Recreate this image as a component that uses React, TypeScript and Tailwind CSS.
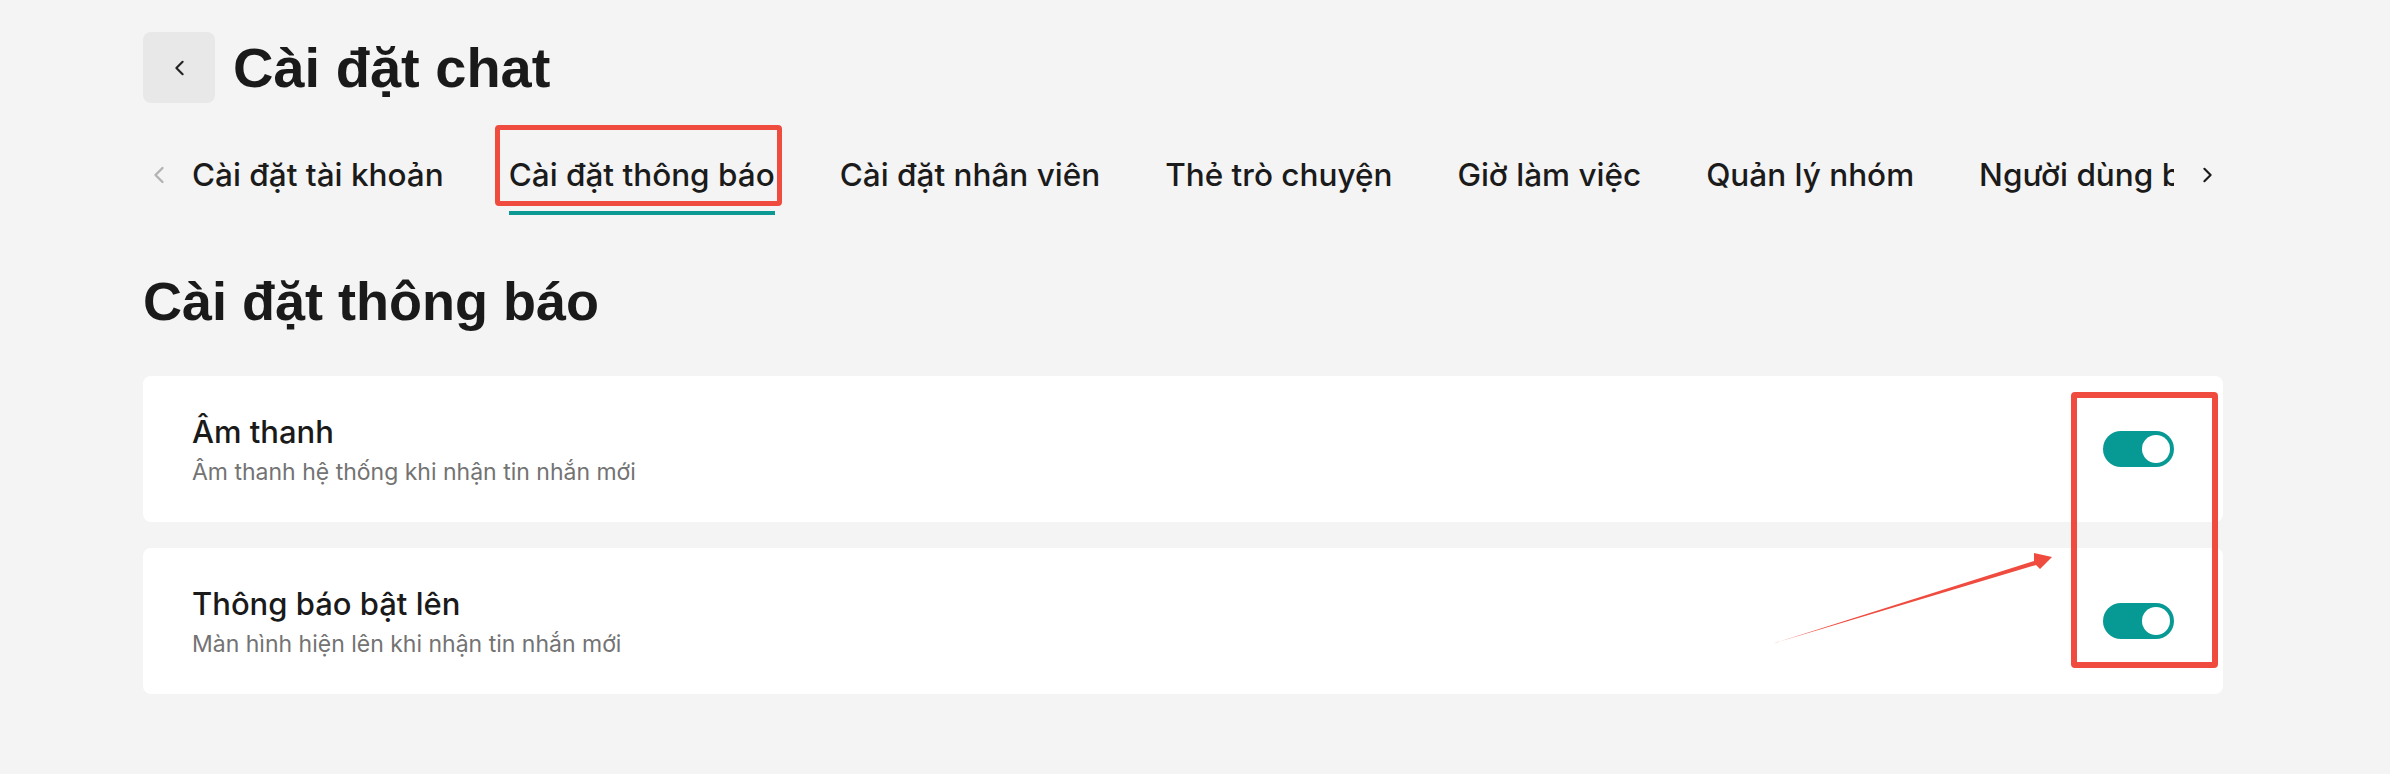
import { useState } from "react";

const TABS = [
  "Cài đặt tài khoản",
  "Cài đặt thông báo",
  "Cài đặt nhân viên",
  "Thẻ trò chuyện",
  "Giờ làm việc",
  "Quản lý nhóm",
  "Người dùng bị chặn",
];

const SETTINGS = [
  { key: "sound", title: "Âm thanh", desc: "Âm thanh hệ thống khi nhận tin nhắn mới" },
  { key: "popup", title: "Thông báo bật lên", desc: "Màn hình hiện lên khi nhận tin nhắn mới" },
];

function Chevron({ dir, className }: { dir: "left" | "right"; className?: string }) {
  return (
    <svg viewBox="0 0 12 18" className={className} fill="none" stroke="currentColor" strokeWidth={2.4} strokeLinecap="round" strokeLinejoin="round">
      {dir === "left" ? <path d="M9.5 2 L2.5 9 L9.5 16" /> : <path d="M2.5 2 L9.5 9 L2.5 16" />}
    </svg>
  );
}

function Toggle({ on, onChange }: { on: boolean; onChange: () => void }) {
  return (
    <button
      onClick={onChange}
      className={`relative h-[36px] w-[71px] shrink-0 rounded-full transition-colors ${on ? "bg-[#079a94]" : "bg-[#cfcfcf]"}`}
    >
      <span
        className={`absolute top-[4px] h-[28px] w-[28px] rounded-full bg-white transition-all ${on ? "left-[39px]" : "left-[4px]"}`}
      />
    </button>
  );
}

export default function App() {
  const [active] = useState(1);
  const [values, setValues] = useState<Record<string, boolean>>({ sound: true, popup: true });

  return (
    <div className="min-h-[774px] w-full bg-[#f4f4f4] pl-[143px] pr-[167px] pt-[32px] font-['Inter',sans-serif] text-[#1b1b1b]">
      {/* header */}
      <div className="flex h-[71px] items-center gap-[18px]">
        <button className="flex h-[71px] w-[72px] items-center justify-center rounded-[8px] bg-[#e8e8e8] text-[#222]">
          <Chevron dir="left" className="h-[16px] w-[11px]" />
        </button>
        <h1 className="font-['Liberation_Sans',Arial,sans-serif] text-[56px] font-bold leading-[56px] text-[#1a1a1a]">
          Cài đặt chat
        </h1>
      </div>

      {/* tabs */}
      <div className="mt-[52px] flex items-start">
        <div className="flex h-[40px] w-[49px] shrink-0 items-center pl-[10px] text-[#b3b3b3]">
          <Chevron dir="left" className="h-[18px] w-[12px]" />
        </div>
        {/* padding keeps the annotation box inside the clipped strip */}
        <div className="-mt-[32px] -ml-[16px] flex min-w-0 flex-1 gap-[65px] overflow-hidden pl-[16px] pt-[32px]">
          {TABS.map((t, i) => (
            <div key={t} className="relative shrink-0">
              <div className="h-[40px] whitespace-nowrap text-[31.5px] font-medium leading-[40px]">{t}</div>
              <div className={`mt-[16px] h-[4px] ${i === active ? "bg-[#0a9a93]" : "bg-transparent"}`} />
              {i === active && (
                <div className="pointer-events-none absolute -left-[14px] -top-[30px] h-[81px] w-[287px] rounded-[4px] border-[5px] border-[#ef4b3f]" />
              )}
            </div>
          ))}
        </div>
        <div className="flex h-[40px] w-[49px] shrink-0 items-center pl-[28px] text-[#1b1b1b]">
          <Chevron dir="right" className="h-[16px] w-[11px]" />
        </div>
      </div>

      {/* section title */}
      <h2 className="mt-[59px] font-['Liberation_Sans',Arial,sans-serif] text-[54px] font-bold leading-[54px] text-[#1a1a1a]">
        Cài đặt thông báo
      </h2>

      {/* cards */}
      <div className="relative mt-[48px] flex flex-col gap-[26px]">
        {SETTINGS.map((s) => (
          <div key={s.key} className="flex h-[146px] items-center justify-between rounded-[8px] bg-white px-[49px]">
            <div className="pt-[2px]">
              <div className="text-[31px] font-medium leading-[38px] text-[#1a1a1a]">{s.title}</div>
              <div className="mt-[5px] text-[23px] leading-[32px] text-[#737373]">{s.desc}</div>
            </div>
            <Toggle on={values[s.key]} onChange={() => setValues((v) => ({ ...v, [s.key]: !v[s.key] }))} />
          </div>
        ))}

        {/* annotation overlays */}
        <div className="pointer-events-none absolute left-[1928px] top-[16px] h-[276px] w-[147px] rounded-[4px] border-[6px] border-[#ef4b3f]" />
        <svg className="pointer-events-none absolute left-0 top-0 h-[320px] w-[2080px]" viewBox="0 0 2080 320">
          <polygon points="1630,267.5 1893,189 1897,193 1909,181 1891,177 1891,185" fill="#ef4b3f" />
        </svg>
      </div>
    </div>
  );
}
